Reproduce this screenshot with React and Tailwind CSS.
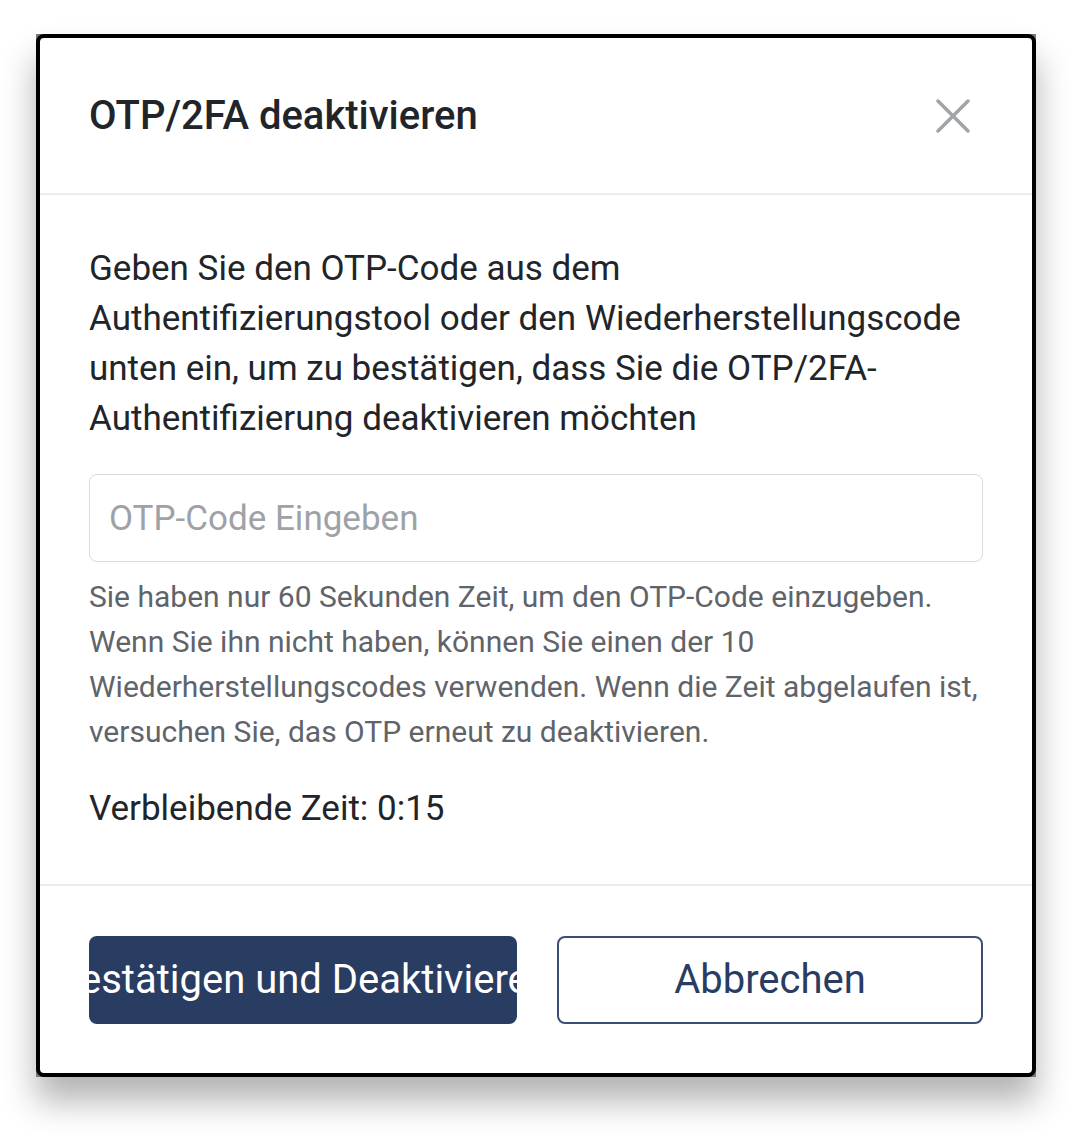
export default function App() {
  return (
    <div className="min-h-[1136px] bg-white pl-[36px] pt-[34px]" style={{ fontFamily: "Roboto, 'Noto Sans', Arial, sans-serif" }}>
      {/* window frame */}
      <div className="w-[1000px] bg-[#7a7a7a] shadow-[0_24px_32px_rgba(0,0,0,0.3)]">
        <div className="rounded-[8px] border-[4px] border-black bg-white">
          {/* Header */}
          <div className="flex h-[157px] items-center justify-between border-b-2 border-[#ececec] pl-[49px] pr-[61px]">
            <h2 className="text-[40px] font-medium text-[#212529]">OTP/2FA deaktivieren</h2>
            <button className="flex h-[36px] w-[36px] items-center justify-center">
              <svg width="34" height="34" viewBox="0 0 34 34" fill="none">
                <path d="M2 2L32 32M32 2L2 32" stroke="#a1a5aa" strokeWidth="3.5" strokeLinecap="round" />
              </svg>
            </button>
          </div>

          {/* Body */}
          <div className="px-[49px] pb-[50px] pt-[49px]">
            <p className="text-[35px] leading-[50px] text-[#212529]">
              Geben Sie den OTP-Code aus dem<br />
              Authentifizierungstool oder den Wiederherstellungscode unten ein, um zu bestätigen, dass Sie die OTP/2FA-Authentifizierung deaktivieren möchten
            </p>
            <input
              placeholder="OTP-Code Eingeben"
              className="mt-[30px] h-[88px] w-full rounded-[8px] border border-[#d9dcdf] px-[19px] text-[35px] text-[#212529] outline-none placeholder:text-[#9ea2a7]"
            />
            <p className="mt-[12px] text-[30px] leading-[45px] text-[#5f646a]">
              Sie haben nur 60 Sekunden Zeit, um den OTP-Code einzugeben. Wenn Sie ihn nicht haben, können Sie einen der 10 Wiederherstellungscodes verwenden. Wenn die Zeit abgelaufen ist, versuchen Sie, das OTP erneut zu deaktivieren.
            </p>
            <p className="mt-[30px] text-[35px] leading-[50px] text-[#212529]">Verbleibende Zeit: 0:15</p>
          </div>

          {/* Footer */}
          <div className="flex gap-[40px] border-t-2 border-[#ececec] px-[49px] pb-[49px] pt-[50px]">
            <button className="flex h-[88px] w-[428px] items-center justify-center overflow-hidden whitespace-nowrap rounded-[8px] bg-[#293c62] text-[40px] text-white">
              Bestätigen und Deaktivieren
            </button>
            <button className="flex h-[88px] flex-1 items-center justify-center rounded-[8px] border-2 border-[#3b4f75] bg-white text-[40px] text-[#293c62]">
              Abbrechen
            </button>
          </div>
        </div>
      </div>
    </div>
  )
}
